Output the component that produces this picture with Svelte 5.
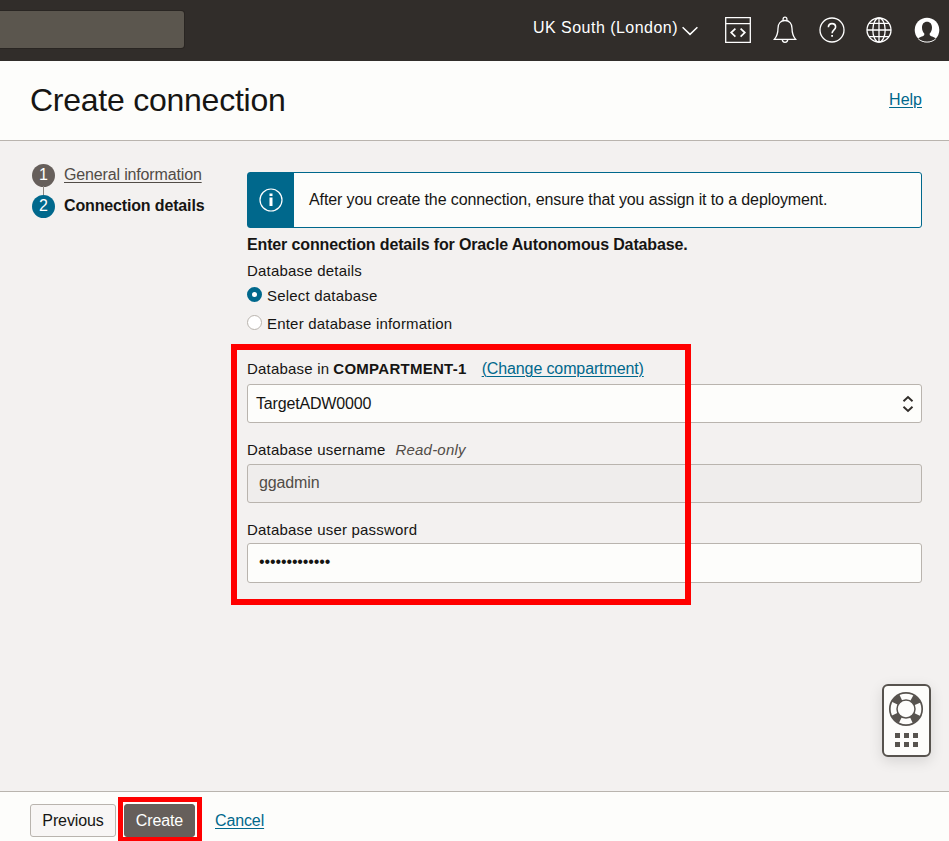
<script>
  const steps = [
    { n: 1, label: 'General information', current: false },
    { n: 2, label: 'Connection details', current: true }
  ];
  let choice = $state('select');
  const options = [
    { id: 'select', label: 'Select database' },
    { id: 'enter', label: 'Enter database information' }
  ];
</script>

<div class="page">
  <header class="topbar">
    <div class="search"></div>
    <div class="region">
      <span>UK South (London)</span>
      <svg width="16" height="10" viewBox="0 0 16 10"><path d="M.6 1.2 8 8.4l7.4-7.2" fill="none" stroke="#fff" stroke-width="1.5" /></svg>
    </div>
    <nav class="tools">
      <svg width="26" height="26" viewBox="0 0 26 26" fill="none" stroke="#fff" stroke-width="1.3">
        <path d="M.7.7h24.6v24.6H.7zM.7 6.6h24.6" />
        <path d="M10.400 11.600 6.200 15.600l4.200 4M15.600 11.600l4.200 4-4.200 4" stroke-width="1.700" />
      </svg>
      <svg width="24" height="28" viewBox="0 0 24 28" fill="none" stroke="#fff" stroke-width="1.3">
        <path d="M1.300 23.400h21.400c-2.200-2.600-3.700-6.400-3.700-11.200C19 7.600 16.300 4.500 12 4.500S5 7.600 5 12.200c0 4.800-1.500 8.600-3.700 11.200z" />
        <path d="M10.100 4.700V3a1.900 1.900 0 0 1 3.800 0v1.700M9.300 23.600a2.700 2.700 0 0 0 5.400 0" />
      </svg>
      <svg width="26" height="26" viewBox="0 0 26 26" fill="none" stroke="#fff" stroke-width="1.3">
        <circle cx="13" cy="13" r="12" />
        <path d="M9.400 10.300c0-2.200 1.400-3.700 3.600-3.700s3.600 1.400 3.600 3.400c0 2.800-3.500 2.900-3.500 6.200" stroke-width="1.600" />
        <path d="M12.200 17.900h1.800v1.800h-1.800z" fill="#fff" stroke="none" />
      </svg>
      <svg width="26" height="26" viewBox="0 0 26 26" fill="none" stroke="#fff" stroke-width="1.3">
        <circle cx="13" cy="13" r="12" />
        <ellipse cx="13" cy="13" rx="6.200" ry="12" />
        <path d="M13 1v24M1 13h24M3 6.400h20M3 19.600h20" />
      </svg>
      <svg width="26" height="26" viewBox="0 0 26 26">
        <circle cx="13" cy="13" r="12.300" fill="#fff" />
        <path d="M13 4.800c3.200 0 5 2.400 5 5.600 0 2.700-1 4.900-2.300 6v1.300c0 1.700 4.700 1.700 6.300 4.100-2.300 2-5.400 3.100-9 3.100s-6.700-1.100-9-3.100c1.600-2.400 6.300-2.400 6.300-4.100v-1.300C9 15.300 8 13.100 8 10.400c0-3.200 1.800-5.600 5-5.600z" fill="#312d2a" />
        <path d="M4.200 21.800C6.300 23.900 9.400 25 13 25s6.700-1.100 8.800-3.200" fill="none" stroke="#fff" stroke-width=".8" />
      </svg>
    </nav>
  </header>

  <div class="titlebar">
    <h1>Create connection</h1>
    <a class="link" href="#help">Help</a>
  </div>

  <main>
    <ol class="steps">
      {#each steps as step}
        <li class:current={step.current}>
          <span class="num">{step.n}</span>
          <span class="step-label">{step.label}</span>
        </li>
      {/each}
    </ol>

    <section class="content">
      <div class="notice">
        <div class="notice-icon">
          <svg width="24" height="24" viewBox="0 0 24 24">
            <circle cx="12" cy="12" r="11" fill="none" stroke="#fff" stroke-width="1.200" />
            <path d="M10.500 5.500h3v2.600h-3zM10.500 9.600h3v8.300h-3z" fill="#fff" />
          </svg>
        </div>
        <p>After you create the connection, ensure that you assign it to a deployment.</p>
      </div>

      <h2>Enter connection details for Oracle Autonomous Database.</h2>

      <div class="group-label">Database details</div>
      {#each options as option}
        <label class="radio">
          <input type="radio" name="db" value={option.id} bind:group={choice} />
          <span>{option.label}</span>
        </label>
      {/each}

      <div class="fields">
        <div class="field-label first">
          <span>Database in</span><b>COMPARTMENT-1</b><a class="link" href="#compartment">(Change compartment)</a>
        </div>
        <div class="box select">
          <span>TargetADW0000</span>
          <svg width="12" height="18" viewBox="0 0 12 18"><path d="M1.500 6.300 6 2l4.500 4.300M1.500 11.700 6 16l4.500-4.300" fill="none" stroke="#312d2a" stroke-width="1.900" /></svg>
        </div>
        <div class="field-label"><span>Database username</span><i>Read-only</i></div>
        <div class="box readonly">ggadmin</div>
        <div class="field-label last"><span>Database user password</span></div>
        <div class="box password">•••••••••••••</div>
        <div class="mark mark-fields"></div>
      </div>
    </section>
  </main>

  <footer>
    <button class="btn">Previous</button>
    <div class="primary-wrap">
      <button class="btn primary">Create</button>
      <div class="mark mark-create"></div>
    </div>
    <a class="link cancel" href="#cancel">Cancel</a>
  </footer>

  <div class="support">
    <svg width="36" height="36" viewBox="0 0 36 36" fill="none" stroke="#57534e">
      <circle cx="18" cy="18" r="12.500" stroke-width="7" stroke-dasharray="8.200 11.435" stroke-dashoffset="-5.720" />
      <circle cx="18" cy="18" r="16.200" stroke-width="1.700" />
      <circle cx="18" cy="18" r="9" stroke-width="1.500" />
    </svg>
    <div class="dots">
      {#each Array(6) as _}<i></i>{/each}
    </div>
  </div>
</div>

<style>
  :global(body) { margin: 0; }
  .page {
    position: relative;
    display: flex;
    flex-direction: column;
    height: 841px;
    overflow: hidden;
    background: #f3f1f0;
    color: #161513;
    font: 16px/20px "Liberation Sans", Arial, sans-serif;
    letter-spacing: -0.12px;
  }
  .page * { box-sizing: border-box; }
  .topbar {
    flex: none;
    display: flex;
    align-items: flex-start;
    height: 61px;
    background: #312d2a;
    color: #fff;
  }
  .search {
    width: 184px;
    height: 37px;
    margin-top: 11px;
    border-radius: 0 3px 3px 0;
    background: #5b564e;
    box-shadow: 0 0 0 1px #292522;
  }
  .region {
    display: flex;
    align-items: center;
    gap: 4px;
    margin: 18px 0 0 349px;
    letter-spacing: 0.47px;
  }
  .region svg { margin-top: 5px; }
  .tools {
    display: flex;
    align-items: center;
    justify-content: space-between;
    width: 215px;
    height: 28px;
    margin: 16px 9px 0 auto;
  }
  .titlebar {
    flex: none;
    display: flex;
    align-items: center;
    justify-content: space-between;
    height: 80px;
    padding: 0 27px 2px 30px;
    border-bottom: 1px solid #b9b4ae;
    background: #fdfdfb;
  }
  .titlebar .link { letter-spacing: 0; }
  h1 {
    margin: 0;
    font-size: 32px;
    line-height: 40px;
    font-weight: 400;
    letter-spacing: -0.25px;
  }
  .link {
    color: #00688c;
    text-decoration: underline;
    text-underline-offset: 2px;
    text-decoration-thickness: 1px;
  }
  main {
    flex: 1;
    display: flex;
    align-items: flex-start;
  }
  .steps {
    width: 247px;
    margin: 0;
    padding: 19px 0 0 32px;
    list-style: none;
  }
  .steps li {
    position: relative;
    display: flex;
    align-items: center;
    gap: 9px;
    height: 31px;
    color: #514c47;
  }
  .steps li:first-child::after {
    content: "";
    position: absolute;
    left: 11px;
    top: 26px;
    width: 1px;
    height: 9px;
    background: #8b8580;
  }
  .num {
    width: 23px;
    height: 23px;
    border-radius: 50%;
    background: #665f5b;
    color: #fff;
    text-align: center;
    line-height: 22px;
    letter-spacing: 0;
  }
  .step-label {
    margin-bottom: 2px;
    letter-spacing: -0.15px;
    text-decoration: underline;
    text-underline-offset: 2px;
    text-decoration-thickness: 1px;
  }
  .current .num { background: #00688c; }
  .current .step-label {
    color: #161513;
    font-weight: 700;
    text-decoration: none;
  }
  .content {
    width: 675px;
    padding-top: 31px;
  }
  .notice {
    display: flex;
    height: 56px;
    border: 1px solid #00688c;
    border-radius: 3px;
    background: #fdfdfb;
  }
  .notice-icon {
    display: flex;
    align-items: center;
    justify-content: center;
    width: 46px;
    background: #00688c;
  }
  .notice p { margin: 0 0 0 15px; line-height: 53px; letter-spacing: -0.11px; }
  h2 {
    margin: 3px 0 0;
    height: 26px;
    font-size: 16px;
    line-height: 28px;
    letter-spacing: -0.14px;
  }
  .group-label, .radio, .field-label {
    font-size: 15px;
    letter-spacing: 0.2px;
  }
  .group-label { height: 25px; line-height: 27px; }
  .radio {
    display: flex;
    height: 28px;
    line-height: 28px;
    gap: 5px;
  }
  .radio input {
    appearance: none;
    width: 15px;
    height: 15px;
    margin: 5px 0 0;
    border: 1px solid #b9b4ae;
    border-radius: 50%;
    background: #fff;
  }
  .radio input:checked { border: 5px solid #00688c; }
  .fields { position: relative; padding-top: 17px; }
  .field-label {
    height: 41px;
    padding-top: 13px;
    line-height: 28px;
  }
  .field-label.first { height: 29px; padding: 0; line-height: 27px; }
  .field-label.last { height: 40px; line-height: 27px; }
  .field-label b { margin-left: 4px; letter-spacing: 0.28px; }
  .field-label .link { margin-left: 15px; font-size: 16px; letter-spacing: -0.12px; }
  .field-label i { margin-left: 10px; color: #514c47; }
  .box {
    height: 39px;
    padding: 0 11px;
    border: 1px solid #b9b4ae;
    border-radius: 3px;
    background: #fdfdfb;
    line-height: 37px;
  }
  .select {
    display: flex;
    align-items: center;
    justify-content: space-between;
    padding: 0 7px 0 8px;
    letter-spacing: -0.17px;
  }
  .readonly { background: #efedec; color: #514c47; line-height: 36px; }
  .password { height: 40px; line-height: 36px; }
  .mark {
    position: absolute;
    border: 6px solid #f00;
    pointer-events: none;
  }
  .mark-fields { left: -16px; top: 6px; width: 460px; height: 261px; }
  footer {
    flex: none;
    display: flex;
    height: 50px;
    padding: 12px 0 0 30px;
    border-top: 1px solid #b9b4ae;
    background: #fdfdfb;
  }
  .btn {
    width: 86px;
    height: 33px;
    padding: 0;
    border: 1px solid #b9b4ae;
    border-radius: 3px;
    background: #f8f6f5;
    color: #161513;
    font: inherit;
    letter-spacing: -0.12px;
  }
  .primary-wrap { position: relative; margin-left: 8px; }
  .btn.primary {
    display: block;
    width: 71px;
    border-color: #665f5b;
    background: #665f5b;
    color: #fff;
  }
  .mark-create { left: -6px; top: -7px; width: 84px; height: 45px; border-width: 5px; }
  .cancel { margin: 7px 0 0 20px; }
  .support {
    position: absolute;
    left: 882px;
    top: 684px;
    width: 49px;
    height: 73px;
    display: flex;
    flex-direction: column;
    align-items: center;
    gap: 6px;
    padding: 5px 1px 0 0;
    border: 2px solid #57534e;
    border-radius: 6px;
    background: #fdfdfb;
    box-shadow: 0 4px 14px rgba(0, 0, 0, 0.12);
  }
  .support svg { flex: none; }
  .dots {
    display: grid;
    grid-template-columns: repeat(3, 5px);
    gap: 4px;
  }
  .dots i { width: 5px; height: 5px; background: #57534e; }
</style>
